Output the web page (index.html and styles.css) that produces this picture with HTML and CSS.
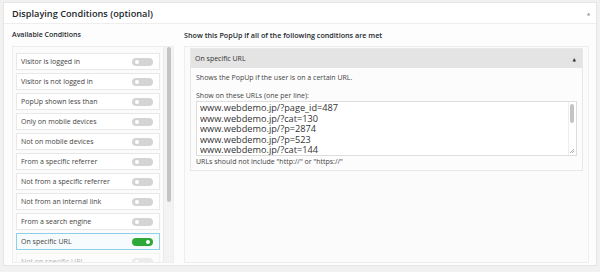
FILE: index.html
```html
<!DOCTYPE html>
<html lang="en">
<head>
    <meta charset="UTF-8">
    <title>Displaying Conditions</title>
    <link rel="stylesheet" href="styles.css">
</head>
<body>
    <div class="postbox">
        <div class="postbox-header">
            <h2>Displaying Conditions (optional)</h2>
            <span class="toggle-arrow">&#9650;</span>
        </div>
        <div class="inside">
            <div class="col-available">
                <h3>Available Conditions</h3>
                <div class="cond-list">
                    <div class="cond-items">
                        <div class="cond-item"><span>Visitor is logged in</span><i class="switch"></i></div>
                        <div class="cond-item"><span>Visitor is not logged in</span><i class="switch"></i></div>
                        <div class="cond-item"><span>PopUp shown less than</span><i class="switch"></i></div>
                        <div class="cond-item"><span>Only on mobile devices</span><i class="switch"></i></div>
                        <div class="cond-item"><span>Not on mobile devices</span><i class="switch"></i></div>
                        <div class="cond-item"><span>From a specific referrer</span><i class="switch"></i></div>
                        <div class="cond-item"><span>Not from a specific referrer</span><i class="switch"></i></div>
                        <div class="cond-item"><span>Not from an internal link</span><i class="switch"></i></div>
                        <div class="cond-item"><span>From a search engine</span><i class="switch"></i></div>
                        <div class="cond-item active"><span>On specific URL</span><i class="switch on"></i></div>
                        <div class="cond-item faded"><span>Not on specific URL</span><i class="switch"></i></div>
                    </div>
                    <div class="list-scroll"><div class="thumb"></div></div>
                </div>
            </div>
            <div class="col-active">
                <h3>Show this PopUp if all of the following conditions are met</h3>
                <div class="rules">
                    <div class="rule">
                        <div class="rule-head">
                            <span>On specific URL</span>
                            <span class="rule-arrow">&#9650;</span>
                        </div>
                        <div class="rule-body">
                            <p class="desc">Shows the PopUp if the user is on a certain URL.</p>
                            <label>Show on these URLs (one per line):</label>
                            <div class="urls">
                                <div class="url-lines">
                                    <div>www.webdemo.jp/?page_id=487</div>
                                    <div>www.webdemo.jp/?cat=130</div>
                                    <div>www.webdemo.jp/?p=2874</div>
                                    <div>www.webdemo.jp/?p=523</div>
                                    <div>www.webdemo.jp/?cat=144</div>
                                </div>
                                <div class="urls-scroll"><div class="thumb"></div></div>
                                <svg class="grip" width="6" height="6" viewBox="0 0 6 6"><path d="M1 5 L5 1 M3 5 L5 3" stroke="#999" stroke-width="0.8"/></svg>
                            </div>
                            <p class="note">URLs should not include "http://" or "https://"</p>
                        </div>
                    </div>
                </div>
            </div>
        </div>
    </div>
</body>
</html>
```

FILE: styles.css
```css
body {
    margin: 0;
    background: #f1f1f1;
    font-family: "Open Sans", "DejaVu Sans", sans-serif;
    color: #444;
}
.postbox {
    margin: 2px 3px 0 3px;
    height: 264px;
    background: #fdfdfd;
    border: 1px solid #e5e5e5;
    box-sizing: border-box;
}
.postbox-header {
    display: flex;
    align-items: center;
    justify-content: space-between;
    height: 20px;
    padding: 0 6px 0 8px;
    background: #fff;
    border-bottom: 1px solid #eee;
}
.postbox-header h2 {
    margin: 0;
    font-size: 9.2px;
    font-weight: 600;
    color: #23282d;
}
.toggle-arrow {
    font-size: 4px;
    color: #999;
}
.inside {
    display: grid;
    grid-template-columns: 162px 1fr;
    gap: 10px;
    padding: 3px 7px 0 8px;
}
h3 {
    margin: 0 0 3px 0;
    height: 16px;
    line-height: 16px;
    font-size: 7px;
    font-weight: 600;
    color: #23282d;
}
.col-active h3 {
    font-size: 7.2px;
}
.cond-list {
    display: flex;
    height: 217px;
    border: 1px solid #eee;
    background: #fbfbfb;
    box-sizing: border-box;
    overflow: hidden;
}
.cond-items {
    flex: 1;
    padding: 6px 3px 0 3px;
}
.cond-item {
    display: flex;
    align-items: center;
    justify-content: space-between;
    height: 15px;
    margin-bottom: 3px;
    padding: 0 6px 0 4px;
    background: #fff;
    border: 1px solid #e8e8e8;
    font-size: 7px;
    color: #444;
}
.cond-item.active {
    border-color: #8fd0e6;
    background: #f6fcfe;
}
.cond-item.faded {
    opacity: 0.4;
}
.switch {
    position: relative;
    width: 21px;
    height: 8px;
    border-radius: 4px;
    background: #d4d4d4;
}
.switch::after {
    content: "";
    position: absolute;
    top: 2px;
    left: 3px;
    width: 4px;
    height: 4px;
    border-radius: 50%;
    background: #fff;
}
.switch.on {
    background: #2ea838;
}
.switch.on::after {
    left: auto;
    right: 3px;
}
.list-scroll {
    width: 9px;
    background: #f3f3f3;
    border-left: 1px solid #eaeaea;
}
.list-scroll .thumb {
    width: 4px;
    height: 155px;
    margin-left: 3px;
    border-radius: 2px;
    background: #c4c4c4;
}
.rules {
    height: 217px;
    border: 1px solid #eee;
    background: #fbfbfb;
    box-sizing: border-box;
    padding: 1px 5px 0 5px;
}
.rule {
    border: 1px solid #e8e8e8;
    background: #fcfcfc;
}
.rule-head {
    display: flex;
    align-items: center;
    justify-content: space-between;
    height: 19px;
    padding: 0 6px 0 4px;
    background: #e4e4e4;
    font-size: 7px;
    color: #333;
}
.rule-arrow {
    font-size: 4.5px;
    color: #333;
}
.rule-body {
    padding: 3px 5px 2px 5px;
    font-size: 7px;
    color: #444;
}
.desc {
    margin: 0 0 6px 0;
    line-height: 14px;
}
label {
    display: block;
    line-height: 10px;
}
.urls {
    position: relative;
    display: flex;
    height: 55px;
    border: 1px solid #ddd;
    background: #fff;
    box-sizing: border-box;
}
.url-lines {
    flex: 1;
    padding: 1px 3px;
    font-size: 9.2px;
    line-height: 10.6px;
    color: #333;
}
.urls-scroll {
    width: 7px;
    border-left: 1px solid #eee;
}
.urls-scroll .thumb {
    width: 4px;
    height: 19px;
    margin: 2px 0 0 1px;
    border-radius: 2px;
    background: #c4c4c4;
}
.grip {
    position: absolute;
    right: 1px;
    bottom: 1px;
}
.note {
    margin: 0;
    line-height: 12px;
}
```
